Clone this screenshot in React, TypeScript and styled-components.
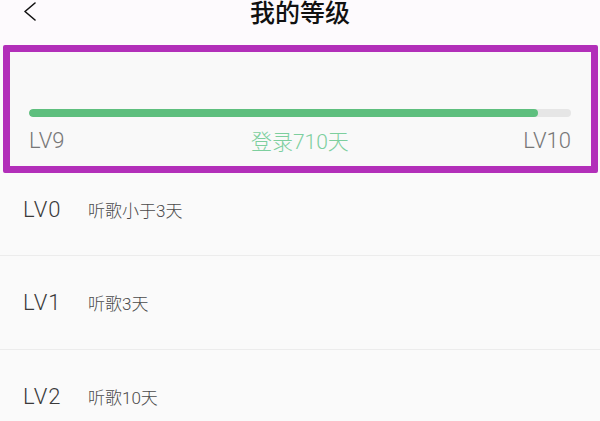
import React from "react";
import styled, { createGlobalStyle } from "styled-components";

const GlobalStyle = createGlobalStyle`
  html, body {
    margin: 0;
    padding: 0;
    background: #fafafa;
    font-family: Roboto, "Noto Sans CJK SC", "Noto Sans", sans-serif;
  }
`;

const levels = [
  { name: "LV0", desc: "听歌小于3天" },
  { name: "LV1", desc: "听歌3天" },
  { name: "LV2", desc: "听歌10天" },
];

const progress = 0.94;

const App = () => {
  return (
    <>
      <GlobalStyle />
      <Page>
        <Header>
          <BackButton>
            <svg width="16" height="20" viewBox="0 0 16 20" fill="none">
              <path d="M13 2 L3 10.5 L13 19" stroke="#111" strokeWidth="1.6" strokeLinecap="round" strokeLinejoin="round" />
            </svg>
          </BackButton>
          <Title>我的等级</Title>
        </Header>
        <ProgressCard>
          <Track>
            <Fill style={{ width: `${progress * 100}%` }} />
          </Track>
          <Labels>
            <LevelLabel>LV9</LevelLabel>
            <DaysLabel>登录710天</DaysLabel>
            <LevelLabel>LV10</LevelLabel>
          </Labels>
        </ProgressCard>
        <List>
          {levels.map((lv, i) => (
            <Row key={lv.name} $first={i === 0}>
              <RowLevel>{lv.name}</RowLevel>
              <RowDesc>{lv.desc}</RowDesc>
            </Row>
          ))}
        </List>
      </Page>
    </>
  );
};

const Page = styled.div`
  width: 600px;
  height: 421px;
  overflow: hidden;
  background: #fafafa;
`;

const Header = styled.div`
  position: relative;
  height: 45px;
  display: flex;
  justify-content: center;
  align-items: flex-start;
  background: #fdfafd;
`;

const BackButton = styled.div`
  position: absolute;
  left: 22px;
  top: 1px;
`;

const Title = styled.div`
  font-family: "Noto Sans CJK SC", sans-serif;
  font-size: 25px;
  font-weight: 500;
  line-height: 21px;
  padding-top: 1px;
  color: #111;
`;

const ProgressCard = styled.div`
  margin: 0 2px 0 3px;
  border: 7px solid #b22fb9;
  border-radius: 2px;
  background: #f9f9f9;
  padding: 57px 20px 0 19px;
  height: 57px;
`;

const Track = styled.div`
  height: 8px;
  border-radius: 4px;
  background: #e6e6e6;
  overflow: hidden;
`;

const Fill = styled.div`
  height: 100%;
  border-radius: 4px;
  background: #5ebf7e;
`;

const Labels = styled.div`
  display: flex;
  justify-content: space-between;
  align-items: center;
  margin-top: 10px;
  height: 26px;
`;

const LevelLabel = styled.span`
  font-size: 22px;
  font-weight: 300;
  color: #777;
`;

const DaysLabel = styled.span`
  font-family: Roboto, "Noto Sans CJK SC", sans-serif;
  font-size: 21px;
  font-weight: 300;
  color: #7dcf9e;
  margin-left: 12px;
`;

const List = styled.div`
  display: flex;
  flex-direction: column;
`;

const Row = styled.div<{ $first?: boolean }>`
  height: ${(p) => (p.$first ? 83 : 94)}px;
  box-sizing: border-box;
  display: flex;
  align-items: center;
  padding: 0 0 ${(p) => (p.$first ? 9 : 0)}px 23px;
  border-bottom: 1.5px solid #ececec;
`;

const RowLevel = styled.span`
  width: 65px;
  font-size: 22px;
  font-weight: 300;
  letter-spacing: 1px;
  color: #3a3a3a;
`;

const RowDesc = styled.span`
  font-family: Roboto, "Noto Sans CJK SC", sans-serif;
  font-size: 17px;
  font-weight: 300;
  color: #4a4a4a;
`;

export default App;
